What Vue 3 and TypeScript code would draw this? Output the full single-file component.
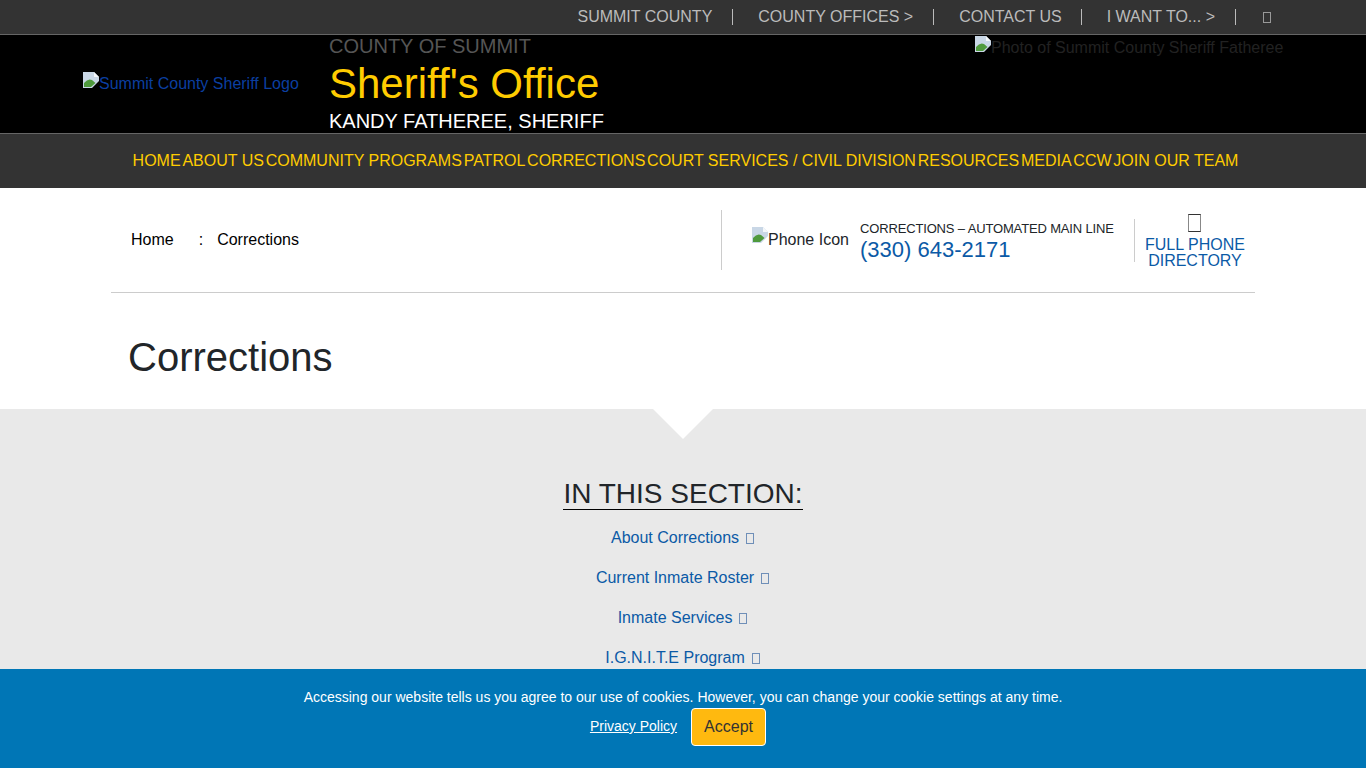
<script setup lang="ts">
const topLinks: string[] = ['SUMMIT COUNTY', 'COUNTY OFFICES >', 'CONTACT US', 'I WANT TO... >']
const navLinks: string[] = ['HOME', 'ABOUT US', 'COMMUNITY PROGRAMS', 'PATROL', 'CORRECTIONS', 'COURT SERVICES / CIVIL DIVISION', 'RESOURCES', 'MEDIA', 'CCW', 'JOIN OUR TEAM']
const sectionLinks: string[] = ['About Corrections', 'Current Inmate Roster', 'Inmate Services', 'I.G.N.I.T.E Program']
</script>

<template>
  <div class="page">
    <div class="topbar">
      <a v-for="l in topLinks" :key="l" class="top-link">{{ l }}</a>
      <span class="top-icon"><i class="tofu tofu-top"></i></span>
    </div>

    <header class="masthead">
      <div class="logo">
        <svg class="broken" width="16" height="16" viewBox="0 0 16 16"><path d="M0 0H11L16 5V9L9 16H0Z" fill="#c9d7e6"/><path d="M11 0L16 5H11Z" fill="#f4f7fa"/><path d="M1 15V11Q5 6 9 8L12.5 11L8 15Z" fill="#4f9a3d"/></svg><span class="alt">Summit County Sheriff Logo</span>
      </div>
      <div class="titles">
        <div class="county">COUNTY OF SUMMIT</div>
        <div class="office">Sheriff's Office</div>
        <div class="sheriff">KANDY FATHEREE, SHERIFF</div>
      </div>
      <div class="photo">
        <svg class="broken" width="16" height="16" viewBox="0 0 16 16"><path d="M0 0H11L16 5V9L9 16H0Z" fill="#c9d7e6"/><path d="M11 0L16 5H11Z" fill="#f4f7fa"/><path d="M1 15V11Q5 6 9 8L12.5 11L8 15Z" fill="#4f9a3d"/></svg><span class="alt">Photo of Summit County Sheriff Fatheree</span>
      </div>
    </header>

    <nav class="mainnav">
      <a v-for="l in navLinks" :key="l">{{ l }}</a>
    </nav>

    <div class="infobar">
      <div class="crumbs">
        <span>Home</span><span class="colon">:</span><span>Corrections</span>
      </div>
      <div class="contact">
        <div class="phone-icon">
          <svg class="broken" width="16" height="16" viewBox="0 0 16 16"><path d="M0 0H11L16 5V9L9 16H0Z" fill="#c9d7e6"/><path d="M11 0L16 5H11Z" fill="#f4f7fa"/><path d="M1 15V11Q5 6 9 8L12.5 11L8 15Z" fill="#4f9a3d"/></svg><span>Phone Icon</span>
        </div>
        <div class="phone-text">
          <div class="phone-label">CORRECTIONS – AUTOMATED MAIN LINE</div>
          <div class="phone-number">(330) 643-2171</div>
        </div>
        <div class="directory">
          <i class="tofu tofu-dir"></i>
          <span>FULL PHONE<br />DIRECTORY</span>
        </div>
      </div>
    </div>

    <h1 class="title">Corrections</h1>

    <section class="section">
      <div class="notch"></div>
      <h2 class="section-head">IN THIS SECTION:</h2>
      <a v-for="l in sectionLinks" :key="l" class="section-link">{{ l }} <i class="tofu tofu-link"></i></a>
    </section>

    <div class="cookie">
      <div class="cookie-text">Accessing our website tells us you agree to our use of cookies. However, you can change your cookie settings at any time.</div>
      <div class="cookie-actions">
        <a class="privacy">Privacy Policy</a>
        <button class="accept" type="button">Accept</button>
      </div>
    </div>
  </div>
</template>

<style>
html, body { margin: 0; overflow: hidden; }
</style>

<style scoped>
.page {
  height: 768px;
  display: flex;
  flex-direction: column;
  font-family: "Liberation Sans", Arial, sans-serif;
  font-size: 16px;
  color: #212529;
  background: #fff;
  overflow: hidden;
}
.tofu { display: inline-block; box-sizing: border-box; border: 1px solid currentColor; flex: none; }
.broken { flex: none; }

.topbar {
  height: 34px;
  flex: none;
  background: #333;
  border-bottom: 1px solid #666;
  display: flex;
  justify-content: flex-end;
  align-items: center;
  padding-right: 95px;
  color: #bbb;
}
.top-link {
  line-height: 16px;
  padding: 0 20px 0 25px;
  border-right: 1px solid #bbb;
}
.top-link:nth-child(3) { padding-right: 19px; }
.top-icon { padding-left: 27px; display: flex; align-items: center; }
.tofu-top { width: 8px; height: 11px; color: #999; }

.masthead {
  height: 98px;
  flex: none;
  box-sizing: content-box;
  background: #000;
  border-bottom: 1px solid #666;
  display: flex;
  padding-left: 83px;
}
.logo {
  width: 246px;
  display: flex;
  align-items: flex-start;
  color: #0b3fa0;
}
.logo .broken { margin-top: 37px; }
.logo .alt { margin-top: 39px; line-height: 20px; }
.titles { width: 646px; }
.county { font-size: 20px; line-height: 23px; color: #555; }
.office { font-size: 42px; line-height: 46px; color: #ffcc00; margin-top: 3px; }
.sheriff { font-size: 20px; line-height: 23px; color: #fff; margin-top: 3px; }
.photo {
  display: flex;
  align-items: flex-start;
  color: #222;
  padding-top: 1px;
  line-height: 20px;
}
.photo .alt { padding-top: 2px; }

.mainnav {
  height: 54px;
  flex: none;
  background: #333;
  display: flex;
  justify-content: center;
  align-items: center;
  gap: 1.8px;
  padding-left: 5px;
  color: #ffcc00;
}

.infobar {
  flex: none;
  box-sizing: border-box;
  height: 105px;
  margin: 0 111px;
  border-bottom: 1px solid #ccc;
  display: flex;
  justify-content: space-between;
  color: #000;
}
.crumbs {
  padding-left: 20px;
  padding-top: 43px;
  line-height: 18px;
  display: flex;
}
.colon { padding: 0 14px 0 25px; }
.contact {
  width: 534px;
  box-sizing: border-box;
  margin-top: 22px;
  height: 60px;
  border-left: 1px solid #ccc;
  display: flex;
  padding-left: 30px;
}
.phone-icon {
  display: flex;
  align-items: flex-start;
  height: 20px;
  margin-top: 17px;
  line-height: 26px;
  color: #212529;
}
.phone-text { margin-left: 11px; width: 274px; }
.phone-label { font-size: 13px; letter-spacing: -0.15px; line-height: 16px; margin-top: 11px; color: #212529; white-space: nowrap; }
.phone-number { font-size: 22px; line-height: 26px; color: #0b5aa6; }
.directory {
  width: 120px;
  box-sizing: border-box;
  height: 43px;
  margin-top: 9px;
  padding-left: 1px;
  border-left: 1px solid #ccc;
  color: #0b5aa6;
  text-align: center;
  line-height: 16px;
  display: flex;
  flex-direction: column;
  align-items: center;
}
.tofu-dir {
  width: 13px;
  height: 18px;
  margin-top: -5px;
  margin-bottom: 5px;
  color: #888;
  border-top-color: #333;
  border-bottom-color: #333;
}

.title {
  flex: none;
  margin: 0;
  height: 116px;
  box-sizing: border-box;
  padding: 40px 0 0 128px;
  font-size: 40px;
  font-weight: 400;
  line-height: 48px;
  color: #212529;
}

.section {
  flex: 1;
  background: #e9e9e9;
  position: relative;
  display: flex;
  flex-direction: column;
  align-items: center;
  padding-top: 69px;
}
.notch {
  position: absolute;
  top: 0;
  left: 653px;
  width: 0;
  height: 0;
  border-left: 30px solid transparent;
  border-right: 30px solid transparent;
  border-top: 30px solid #fff;
}
.section-head {
  margin: 0 0 16px;
  font-size: 28px;
  font-weight: 400;
  line-height: 31px;
  color: #212529;
  border-bottom: 1px solid #000;
}
.section-link {
  color: #0b5aa6;
  line-height: 24px;
  margin-bottom: 16px;
}
.tofu-link {
  width: 8px;
  height: 11px;
  margin-left: 2.5px;
  margin-right: 1px;
  vertical-align: -1px;
  color: #6f8fb8;
}

.cookie {
  position: fixed;
  left: 0;
  right: 0;
  bottom: 0;
  height: 99px;
  background: #0076b6;
  color: #fff;
  text-align: center;
  font-size: 14px;
}
.cookie-text { margin-top: 20px; line-height: 17px; }
.cookie-actions {
  display: flex;
  justify-content: center;
  align-items: center;
  gap: 14px;
  margin-top: 2px;
  padding-right: 10px;
}
.privacy { font-size: 14px; color: #fff; text-decoration: underline; margin-bottom: 2px; }
.accept {
  width: 75px;
  height: 38px;
  padding: 0;
  background: #ffb90f;
  color: #333;
  border: 1px solid #fff;
  border-radius: 4px;
  font-family: inherit;
  font-size: 16px;
}
</style>
